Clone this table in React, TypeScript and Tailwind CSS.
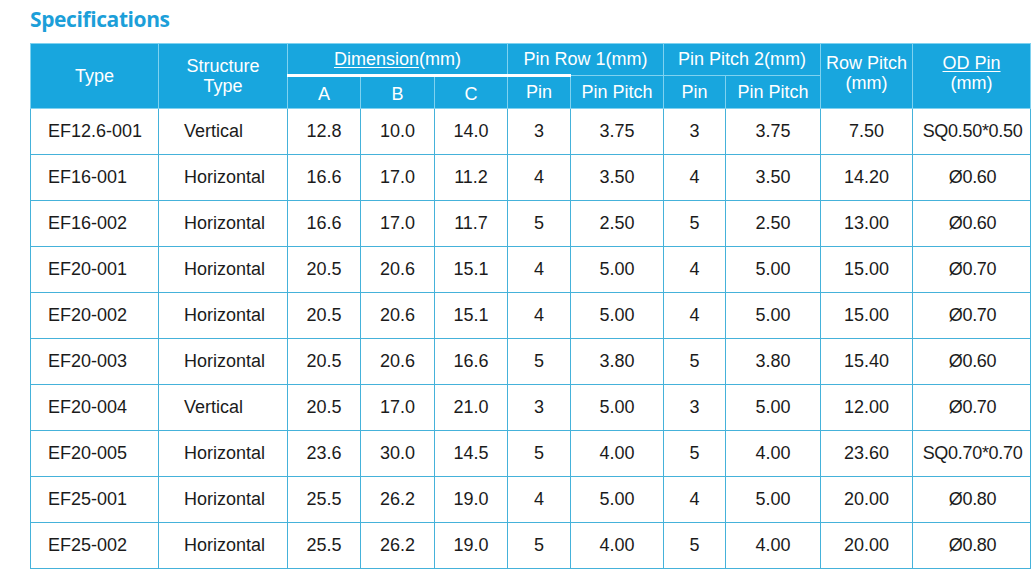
const rows = [
  ['EF12.6-001', 'Vertical', '12.8', '10.0', '14.0', '3', '3.75', '3', '3.75', '7.50', 'SQ0.50*0.50'],
  ['EF16-001', 'Horizontal', '16.6', '17.0', '11.2', '4', '3.50', '4', '3.50', '14.20', 'Ø0.60'],
  ['EF16-002', 'Horizontal', '16.6', '17.0', '11.7', '5', '2.50', '5', '2.50', '13.00', 'Ø0.60'],
  ['EF20-001', 'Horizontal', '20.5', '20.6', '15.1', '4', '5.00', '4', '5.00', '15.00', 'Ø0.70'],
  ['EF20-002', 'Horizontal', '20.5', '20.6', '15.1', '4', '5.00', '4', '5.00', '15.00', 'Ø0.70'],
  ['EF20-003', 'Horizontal', '20.5', '20.6', '16.6', '5', '3.80', '5', '3.80', '15.40', 'Ø0.60'],
  ['EF20-004', 'Vertical', '20.5', '17.0', '21.0', '3', '5.00', '3', '5.00', '12.00', 'Ø0.70'],
  ['EF20-005', 'Horizontal', '23.6', '30.0', '14.5', '5', '4.00', '5', '4.00', '23.60', 'SQ0.70*0.70'],
  ['EF25-001', 'Horizontal', '25.5', '26.2', '19.0', '4', '5.00', '4', '5.00', '20.00', 'Ø0.80'],
  ['EF25-002', 'Horizontal', '25.5', '26.2', '19.0', '5', '4.00', '5', '4.00', '20.00', 'Ø0.80']
]

const widths = [128, 129, 73, 74, 73, 63, 93, 62, 95, 92, 118]

export default function App() {
  return (
    <div className="min-h-[573px] bg-white pl-[30px] font-['Liberation_Sans',Arial,sans-serif]">
      <h2 className="pt-[2px] text-[21px] leading-[34px] font-bold tracking-[-0.4px] text-[#1c9fd9] font-['Open_Sans',sans-serif]">
        Specifications
      </h2>
      <div className="pt-[7px]">
        <SpecTable />
      </div>
    </div>
  )
}

function SpecTable() {
  const head = 'border border-[#7fd2f0] bg-[#18a6de] text-center align-middle font-normal text-white'
  return (
    <table className="w-[1000px] table-fixed border-collapse text-[18px]">
      <colgroup>
        {widths.map((w, i) => (
          <col key={i} style={{ width: w }} />
        ))}
      </colgroup>
      <thead>
        <tr className="h-[32px]">
          <th rowSpan={2} className={head}>Type</th>
          <th rowSpan={2} className={`${head} leading-[20px]`}>
            Structure
            <br />
            Type
          </th>
          <th colSpan={3} className={`${head} leading-[20px]`}>
            <span className="underline decoration-1 underline-offset-2">Dimension</span>(mm)
          </th>
          <th colSpan={2} className={head}>Pin Row 1(mm)</th>
          <th colSpan={2} className={head}>Pin Pitch 2(mm)</th>
          <th rowSpan={2} className={`${head} pb-[6px] leading-[20px]`}>
            Row Pitch
            <br />
            (mm)
          </th>
          <th rowSpan={2} className={`${head} pb-[6px] leading-[20px]`}>
            <span className="underline decoration-1 underline-offset-2">OD Pin</span>
            <br />
            (mm)
          </th>
        </tr>
        <tr className="h-[33px]">
          {['A', 'B', 'C'].map((l) => (
            <th key={l} className={`${head} border-t-[3px] border-t-white pt-[2px] leading-[18px]`}>
              {l}
            </th>
          ))}
          <th className={`${head} border-t-[3px] border-t-white`}>Pin</th>
          <th className={head}>Pin Pitch</th>
          <th className={head}>Pin</th>
          <th className={head}>Pin Pitch</th>
        </tr>
      </thead>
      <tbody>
        {rows.map((r) => (
          <tr key={r[0]} className="h-[46px]">
            {r.map((v, i) => (
              <td
                key={i}
                className={`border border-[#45b2da] text-[#1b1b1b] ${
                  i === 0 ? 'pl-[17px] text-left' : i === 1 ? 'pl-[25px] text-left' : 'text-center'
                } ${i === 10 ? 'pl-[2px] tracking-[-0.3px]' : ''}`}
              >
                {v}
              </td>
            ))}
          </tr>
        ))}
      </tbody>
    </table>
  )
}
